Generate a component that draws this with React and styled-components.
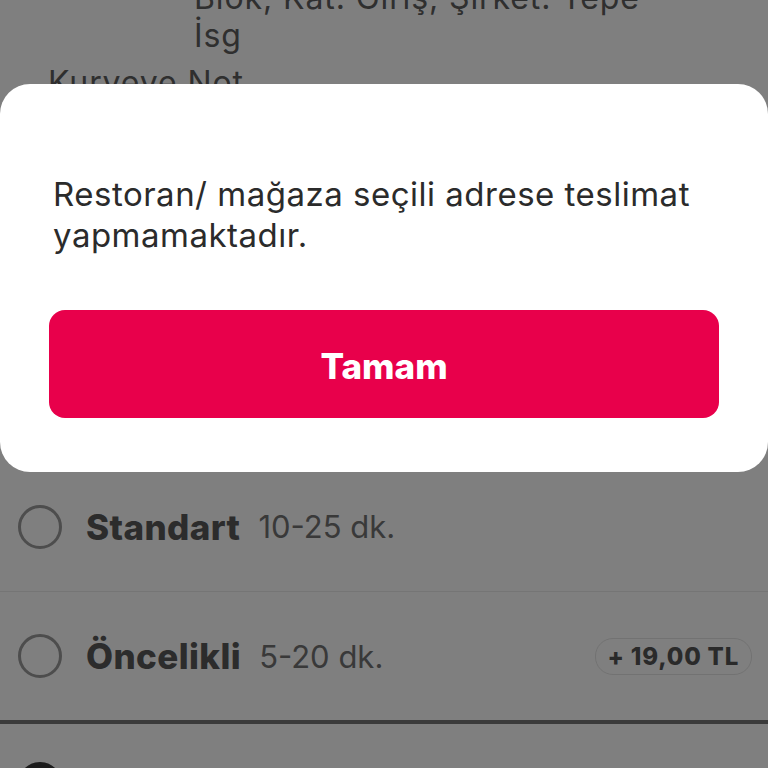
import React from 'react';
import styled, { createGlobalStyle } from 'styled-components';

const GlobalStyle = createGlobalStyle`
  html, body {
    margin: 0;
    padding: 0;
    background: #fff;
    font-family: Inter, "Noto Sans", sans-serif;
  }
`;

const Screen = styled.div`
  position: relative;
  width: 768px;
  height: 768px;
  overflow: hidden;
  background: #fff;
`;

const Address = styled.div`
  margin-top: -21px;
  padding-left: 194px;
  font-size: 32px;
  line-height: 38px;
  letter-spacing: 0.9px;
  color: #5e5e5e;
`;

const NoteLabel = styled.div`
  margin-top: 9px;
  padding-left: 48px;
  font-size: 32px;
  line-height: 38px;
  letter-spacing: 0.9px;
  color: #5e5e5e;
`;

const NoteInput = styled.div`
  margin: 20px 24px 0;
  height: 150px;
  box-sizing: border-box;
  border: 1px solid #ddd;
  border-radius: 12px;
`;

const SectionTitle = styled.div`
  box-sizing: border-box;
  height: 190px;
  padding: 72px 24px 0;
  font-size: 30px;
  font-weight: 700;
  color: #5e5e5e;
`;

const Option = styled.div`
  box-sizing: border-box;
  display: flex;
  align-items: center;
  height: ${p => p.height}px;
  padding: 0 16px 0 18px;
  border-bottom: ${p => p.divider};
`;

const Radio = styled.span`
  box-sizing: border-box;
  flex: none;
  width: 44px;
  height: 44px;
  border-radius: 50%;
  border: 3px solid ${p => (p.checked ? '#383838' : '#9a9a9a')};
  background: ${p => (p.checked ? '#383838' : 'transparent')};
  align-self: ${p => (p.top ? 'flex-start' : 'center')};
  margin-top: ${p => (p.top ? '38px' : '0')};
`;

const OptionName = styled.span`
  margin-left: 24px;
  font-size: 35px;
  font-weight: 800;
  letter-spacing: 0.4px;
  color: #585858;
`;

const Duration = styled.span`
  margin-left: 18px;
  font-size: 31px;
  color: #727272;
`;

const Badge = styled.span`
  margin-left: auto;
  display: inline-flex;
  align-items: center;
  height: 35px;
  padding: 0 12px;
  border: 1.5px solid #e4e4e4;
  border-radius: 18px;
  font-size: 24px;
  font-weight: 800;
  letter-spacing: 0.8px;
  color: #555;
`;

const Overlay = styled.div`
  position: absolute;
  inset: 0;
  background: rgba(0, 0, 0, 0.5);
  display: flex;
  flex-direction: column;
  padding-top: 84px;
`;

const Dialog = styled.div`
  background: #fff;
  border-radius: 30px;
  padding: 90px 49px 54px;
`;

const Message = styled.p`
  margin: 0 0 54px;
  padding-left: 4px;
  font-size: 33px;
  line-height: 41px;
  letter-spacing: 0.5px;
  color: #2b2b2b;
`;

const ConfirmButton = styled.button`
  display: block;
  width: 100%;
  height: 108px;
  border: none;
  border-radius: 16px;
  background: #e8004b;
  color: #fff;
  font-family: Inter, sans-serif;
  font-size: 35px;
  font-weight: 800;
  padding-top: 4px;
`;

export default function App() {
  return (
    <Screen>
      <GlobalStyle />
      <Address>
        Blok, Kat: Giriş, Şirket: Tepe
        <br />
        İsg
      </Address>
      <NoteLabel>Kuryeye Not</NoteLabel>
      <NoteInput />
      <SectionTitle>Teslimat Zamanı</SectionTitle>
      <Option height={130} divider="1px solid rgba(0,0,0,0.08)">
        <Radio />
        <OptionName>Standart</OptionName>
        <Duration>10-25 dk.</Duration>
      </Option>
      <Option height={132} divider="4px solid #777">
        <Radio />
        <OptionName>Öncelikli</OptionName>
        <Duration>5-20 dk.</Duration>
        <Badge>+ 19,00 TL</Badge>
      </Option>
      <Option height={130} divider="none">
        <Radio checked top />
        <OptionName>Planlı</OptionName>
      </Option>
      <Overlay>
        <Dialog>
          <Message>Restoran/ mağaza seçili adrese teslimat yapmamaktadır.</Message>
          <ConfirmButton>Tamam</ConfirmButton>
        </Dialog>
      </Overlay>
    </Screen>
  );
}
